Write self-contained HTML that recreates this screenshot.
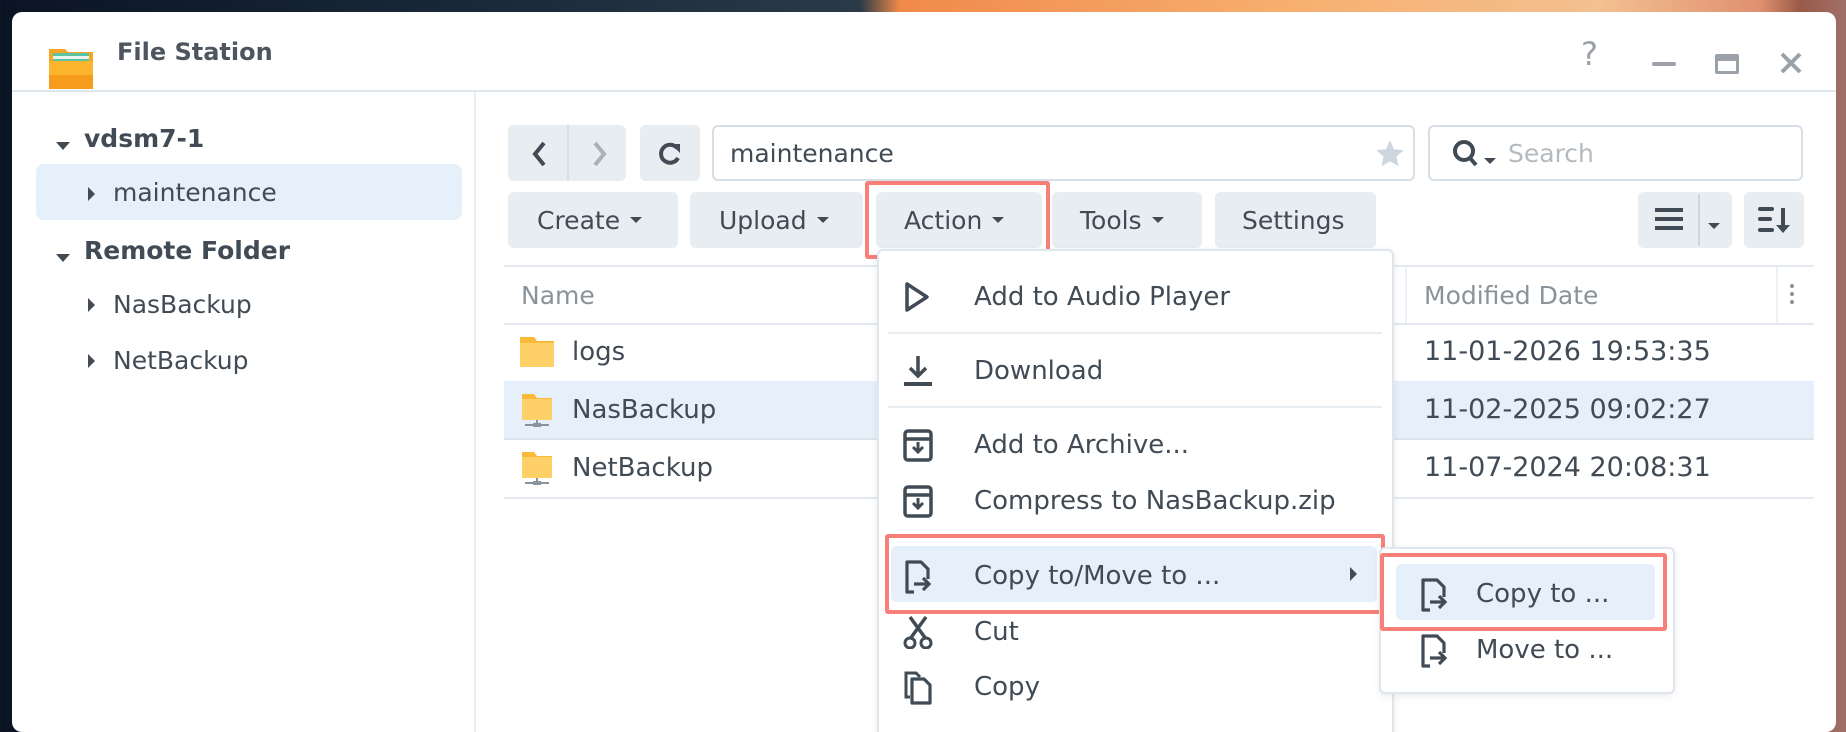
<!DOCTYPE html>
<html><head><meta charset="utf-8"><style>
*{box-sizing:border-box;margin:0;padding:0}
body{width:1846px;height:716px;overflow:hidden;position:relative;font-family:"DejaVu Sans","Liberation Sans",sans-serif;color:#414b55;
background:linear-gradient(90deg,#0b1424 0px,#1a2a3a 500px,#2a3a48 860px,#f08a4a 900px,#f7b070 1300px,#f3c090 1600px,#e09070 1760px,#9a5a48 1800px,#a07068 1846px);}
.win{position:absolute;left:12px;top:12px;width:1824px;height:720px;background:#fff;border-radius:10px;overflow:hidden}
.abs{position:absolute}
.t{position:absolute;font-size:24px;white-space:nowrap;line-height:1}
.m{font-size:26px}
.btn{position:absolute;background:#e8edf2;border-radius:6px}
.caret{display:inline-block;width:0;height:0;border-left:6px solid transparent;border-right:6px solid transparent;border-top:6px solid #414b55;vertical-align:middle;margin-left:10px;position:relative;top:-2px}
.tri-r{display:inline-block;width:0;height:0;border-top:7px solid transparent;border-bottom:7px solid transparent;border-left:7px solid #414b55}
.tri-d{display:inline-block;width:0;height:0;border-left:7px solid transparent;border-right:7px solid transparent;border-top:8px solid #414b55}
.red{position:absolute;border:4px solid #f77f78;border-radius:3px}
</style></head><body>
<div class="win">
 <svg class="abs" style="left:35px;top:33px" width="48" height="46" viewBox="0 0 48 46">
  <path d="M2 4h16l3 3h25v37H2z" fill="#f6a623"/>
  <rect x="6" y="8" width="36" height="10" fill="#5bc3a2"/>
  <rect x="6" y="11" width="36" height="3" fill="#e8f4ee"/>
  <path d="M2 16h44v28H2z" fill="#fbb42c"/>
  <path d="M2 30h44v14H2z" fill="#f69b1c"/>
 </svg>
 <div class="t" style="left:105px;top:28px;font-size:24px;font-weight:bold;color:#4c5560">File Station</div>
 <div class="t" style="left:1569px;top:26px;font-size:32px;color:#9ba1a8">?</div>
 <div class="abs" style="left:1640px;top:50px;width:24px;height:4px;background:#9ba1a8;border-radius:2px"></div>
 <div class="abs" style="left:1703px;top:42px;width:24px;height:20px;border:3px solid #9ba1a8;border-top-width:7px;border-radius:2px"></div>
 <svg class="abs" style="left:1768px;top:40px" width="22" height="22"><path d="M2 2L20 20M20 2L2 20" stroke="#9ba1a8" stroke-width="4"/></svg>
 <div class="abs" style="left:0;top:78px;width:1824px;height:2px;background:#dfe6ee"></div>
 <div class="abs" style="left:462px;top:80px;width:2px;height:640px;background:#e8edf2"></div>
 <div class="abs" style="left:24px;top:152px;width:426px;height:56px;background:#e6f0fb;border-radius:8px"></div>
 <div class="abs" style="left:44px;top:123px"><span class="tri-d"></span></div>
 <div class="t" style="left:72px;top:114px;font-weight:bold;font-size:25px">vdsm7-1</div>
 <div class="abs" style="left:76px;top:174px"><span class="tri-r"></span></div>
 <div class="t" style="left:101px;top:168px;font-size:25px">maintenance</div>
 <div class="abs" style="left:44px;top:235px"><span class="tri-d"></span></div>
 <div class="t" style="left:72px;top:226px;font-weight:bold;font-size:25px">Remote Folder</div>
 <div class="abs" style="left:76px;top:285px"><span class="tri-r"></span></div>
 <div class="t" style="left:101px;top:280px;font-size:25px">NasBackup</div>
 <div class="abs" style="left:76px;top:341px"><span class="tri-r"></span></div>
 <div class="t" style="left:101px;top:336px;font-size:25px">NetBackup</div>
 <div class="btn" style="left:496px;top:113px;width:118px;height:56px"></div>
 <div class="abs" style="left:555px;top:113px;width:2px;height:56px;background:#d6dee7"></div>
 <svg class="abs" style="left:518px;top:128px" width="20" height="28"><path d="M14 3L5 14l9 11" stroke="#414b55" stroke-width="4" fill="none"/></svg>
 <svg class="abs" style="left:578px;top:128px" width="20" height="28"><path d="M5 3l9 11-9 11" stroke="#aab1b8" stroke-width="4" fill="none"/></svg>
 <div class="btn" style="left:628px;top:113px;width:60px;height:56px"></div>
 <svg class="abs" style="left:645px;top:129px" width="26" height="26"><path d="M20 7A9 9 0 1 0 21 17" stroke="#414b55" stroke-width="4" fill="none"/><path d="M14 3h9v9z" fill="#414b55"/></svg>
 <div class="abs" style="left:700px;top:113px;width:703px;height:56px;border:2px solid #d6dee7;border-radius:6px"></div>
 <div class="t" style="left:718px;top:129px;font-size:25px">maintenance</div>
 <svg class="abs" style="left:1363px;top:127px" width="30" height="30" viewBox="0 0 24 24"><path d="M12 1l3.2 7.2 7.8.7-5.9 5.2 1.8 7.7L12 17.8 5.1 21.8l1.8-7.7L1 8.9l7.8-.7z" fill="#cdd5de"/></svg>
 <div class="abs" style="left:1416px;top:113px;width:375px;height:56px;border:2px solid #d6dee7;border-radius:6px"></div>
 <svg class="abs" style="left:1440px;top:127px" width="30" height="30"><circle cx="12" cy="12" r="9" stroke="#414b55" stroke-width="4" fill="none"/><path d="M18 19l6 7" stroke="#414b55" stroke-width="4"/></svg>
 <div class="abs" style="left:1472px;top:140px"><span class="caret" style="margin:0"></span></div>
 <div class="t" style="left:1496px;top:129px;font-size:25px;color:#b4bac0">Search</div>
 <div class="btn" style="left:496px;top:180px;width:170px;height:56px"></div>
 <div class="t" style="left:525px;top:196px;font-size:25px">Create<span class="caret"></span></div>
 <div class="btn" style="left:678px;top:180px;width:173px;height:56px"></div>
 <div class="t" style="left:707px;top:196px;font-size:25px">Upload<span class="caret"></span></div>
 <div class="btn" style="left:864px;top:180px;width:166px;height:56px"></div>
 <div class="t" style="left:892px;top:196px;font-size:25px">Action<span class="caret"></span></div>
 <div class="btn" style="left:1040px;top:180px;width:150px;height:56px"></div>
 <div class="t" style="left:1068px;top:196px;font-size:25px">Tools<span class="caret"></span></div>
 <div class="btn" style="left:1203px;top:180px;width:161px;height:56px"></div>
 <div class="t" style="left:1230px;top:196px;font-size:25px">Settings</div>
 <div class="red" style="left:853px;top:169px;width:185px;height:78px"></div>
 <div class="btn" style="left:1626px;top:180px;width:94px;height:56px"></div>
 <div class="abs" style="left:1686px;top:182px;width:2px;height:52px;background:#cdd5de"></div>
 <div class="abs" style="left:1643px;top:196px;width:28px;height:4px;background:#414b55;box-shadow:0 9px 0 #414b55,0 18px 0 #414b55"></div>
 <div class="abs" style="left:1696px;top:205px"><span class="caret" style="margin:0"></span></div>
 <div class="btn" style="left:1732px;top:180px;width:60px;height:56px"></div>
 <svg class="abs" style="left:1746px;top:194px" width="34" height="30"><path d="M2 3h12M2 13h10M2 24h12" stroke="#414b55" stroke-width="4" stroke-linecap="round"/><path d="M25 2v22" stroke="#414b55" stroke-width="4"/><path d="M18 19h14l-7 8z" fill="#414b55"/></svg>
 <div class="abs" style="left:492px;top:253px;width:1310px;height:2px;background:#e3e9ef"></div>
 <div class="t" style="left:509px;top:271px;color:#8a929a;font-size:25px">Name</div>
 <div class="abs" style="left:1393px;top:255px;width:2px;height:56px;background:#eef1f4"></div>
 <div class="t" style="left:1412px;top:271px;color:#8a929a;font-size:25px">Modified Date</div>
 <div class="abs" style="left:1764px;top:255px;width:2px;height:56px;background:#eef1f4"></div>
 <div class="abs" style="left:1778px;top:272px;width:4px;height:4px;background:#8a929a;border-radius:2px;box-shadow:0 8px 0 #8a929a,0 16px 0 #8a929a"></div>
 <div class="abs" style="left:492px;top:311px;width:1310px;height:2px;background:#e3e9ef"></div>
 <div class="abs" style="left:492px;top:369px;width:1310px;height:58px;background:#e6f0fb"></div>
 <div class="abs" style="left:492px;top:426px;width:1310px;height:2px;background:#dde4ec"></div>
 <div class="abs" style="left:492px;top:485px;width:1310px;height:2px;background:#e3e9ef"></div>
 <svg class="abs" style="left:508px;top:325px" width="34" height="30"><path d="M0 0h14l3 4h17v26H0z" fill="#fbb938"/><rect y="6" width="34" height="24" fill="#fdd068"/></svg>
 <div class="t m" style="left:560px;top:327px">logs</div>
 <svg class="abs" style="left:510px;top:382px" width="30" height="34"><path d="M0 0h12l3 4h15v22H0z" fill="#fbb938"/><rect y="5" width="30" height="21" fill="#fdd068"/><path d="M15 26v4M3 31h24" stroke="#8a929a" stroke-width="2"/><rect x="11" y="29" width="8" height="4" fill="#8a929a"/></svg>
 <div class="t m" style="left:560px;top:385px">NasBackup</div>
 <svg class="abs" style="left:510px;top:440px" width="30" height="34"><path d="M0 0h12l3 4h15v22H0z" fill="#fbb938"/><rect y="5" width="30" height="21" fill="#fdd068"/><path d="M15 26v4M3 31h24" stroke="#8a929a" stroke-width="2"/><rect x="11" y="29" width="8" height="4" fill="#8a929a"/></svg>
 <div class="t m" style="left:560px;top:443px">NetBackup</div>
 <div class="t" style="left:1412px;top:326px;font-size:27px">11-01-2026 19:53:35</div>
 <div class="t" style="left:1412px;top:384px;font-size:27px">11-02-2025 09:02:27</div>
 <div class="t" style="left:1412px;top:442px;font-size:27px">11-07-2024 20:08:31</div>
 <!-- action menu -->
 <div class="abs" style="left:865px;top:237px;width:517px;height:500px;background:#fff;border:2px solid #dfe6ee;border-radius:6px;box-shadow:0 2px 8px rgba(0,0,0,.08)"></div>
 <div class="abs" style="left:876px;top:320px;width:494px;height:2px;background:#e8edf2"></div>
 <div class="abs" style="left:876px;top:394px;width:494px;height:2px;background:#e8edf2"></div>
 <div class="abs" style="left:879px;top:534px;width:486px;height:56px;background:#e6f0fb;border-radius:5px"></div>
 <svg class="abs" style="left:890px;top:268px" width="30" height="34"><path d="M5 4v26l20-13z" stroke="#414b55" stroke-width="3.5" fill="none" stroke-linejoin="round"/></svg>
 <div class="t m" style="left:962px;top:272px">Add to Audio Player</div>
 <svg class="abs" style="left:890px;top:342px" width="32" height="34"><path d="M16 2v20M8 14l8 8 8-8" stroke="#414b55" stroke-width="3.5" fill="none"/><path d="M2 30h28" stroke="#414b55" stroke-width="4"/></svg>
 <div class="t m" style="left:962px;top:346px">Download</div>
 <svg class="abs" style="left:890px;top:416px" width="32" height="34"><rect x="3" y="3" width="26" height="29" rx="3" stroke="#414b55" stroke-width="3.5" fill="none"/><path d="M3 11h26" stroke="#414b55" stroke-width="3.5"/><path d="M16 14v10M11 19l5 5 5-5" stroke="#414b55" stroke-width="3" fill="none"/></svg>
 <div class="t m" style="left:962px;top:420px">Add to Archive...</div>
 <svg class="abs" style="left:890px;top:472px" width="32" height="34"><rect x="3" y="3" width="26" height="29" rx="3" stroke="#414b55" stroke-width="3.5" fill="none"/><path d="M3 11h26" stroke="#414b55" stroke-width="3.5"/><path d="M16 14v10M11 19l5 5 5-5" stroke="#414b55" stroke-width="3" fill="none"/></svg>
 <div class="t m" style="left:962px;top:476px">Compress to NasBackup.zip</div>
 <svg class="abs" style="left:890px;top:547px" width="34" height="36"><path d="M12 33H5V3h14l7 7v10" stroke="#414b55" stroke-width="3.2" fill="none" stroke-linejoin="round"/><path d="M12 25h14M21 19l6 6-6 6" stroke="#414b55" stroke-width="3.2" fill="none"/></svg>
 <div class="t m" style="left:962px;top:551px">Copy to/Move to ...</div>
 <div class="abs" style="left:1338px;top:554px"><span class="tri-r"></span></div>
 <div class="red" style="left:873px;top:522px;width:500px;height:80px"></div>
 <svg class="abs" style="left:890px;top:603px" width="32" height="34"><path d="M8 2l16 22M24 2L8 24" stroke="#414b55" stroke-width="3.5"/><circle cx="8" cy="28" r="5" stroke="#414b55" stroke-width="3" fill="none"/><circle cx="24" cy="28" r="5" stroke="#414b55" stroke-width="3" fill="none"/></svg>
 <div class="t m" style="left:962px;top:607px">Cut</div>
 <svg class="abs" style="left:890px;top:657px" width="32" height="36"><path d="M8 28H4V4h10l4 4" stroke="#414b55" stroke-width="3" fill="none"/><path d="M10 10h12l6 6v18H10z" stroke="#414b55" stroke-width="3.2" fill="none" stroke-linejoin="round"/></svg>
 <div class="t m" style="left:962px;top:662px">Copy</div>
 <!-- submenu -->
 <div class="abs" style="left:1367px;top:535px;width:296px;height:147px;background:#fff;border:2px solid #dfe6ee;border-radius:6px;box-shadow:0 2px 8px rgba(0,0,0,.08)"></div>
 <div class="abs" style="left:1384px;top:552px;width:259px;height:56px;background:#e6f0fb;border-radius:5px"></div>
 <div class="red" style="left:1368px;top:541px;width:287px;height:78px"></div>
 <svg class="abs" style="left:1406px;top:565px" width="34" height="36"><path d="M12 33H5V3h14l7 7v10" stroke="#414b55" stroke-width="3.2" fill="none" stroke-linejoin="round"/><path d="M12 25h14M21 19l6 6-6 6" stroke="#414b55" stroke-width="3.2" fill="none"/></svg>
 <div class="t m" style="left:1464px;top:569px">Copy to ...</div>
 <svg class="abs" style="left:1406px;top:621px" width="34" height="36"><path d="M12 33H5V3h14l7 7v10" stroke="#414b55" stroke-width="3.2" fill="none" stroke-linejoin="round"/><path d="M12 25h14M21 19l6 6-6 6" stroke="#414b55" stroke-width="3.2" fill="none"/></svg>
 <div class="t m" style="left:1464px;top:625px">Move to ...</div>
</div>
</body></html>
